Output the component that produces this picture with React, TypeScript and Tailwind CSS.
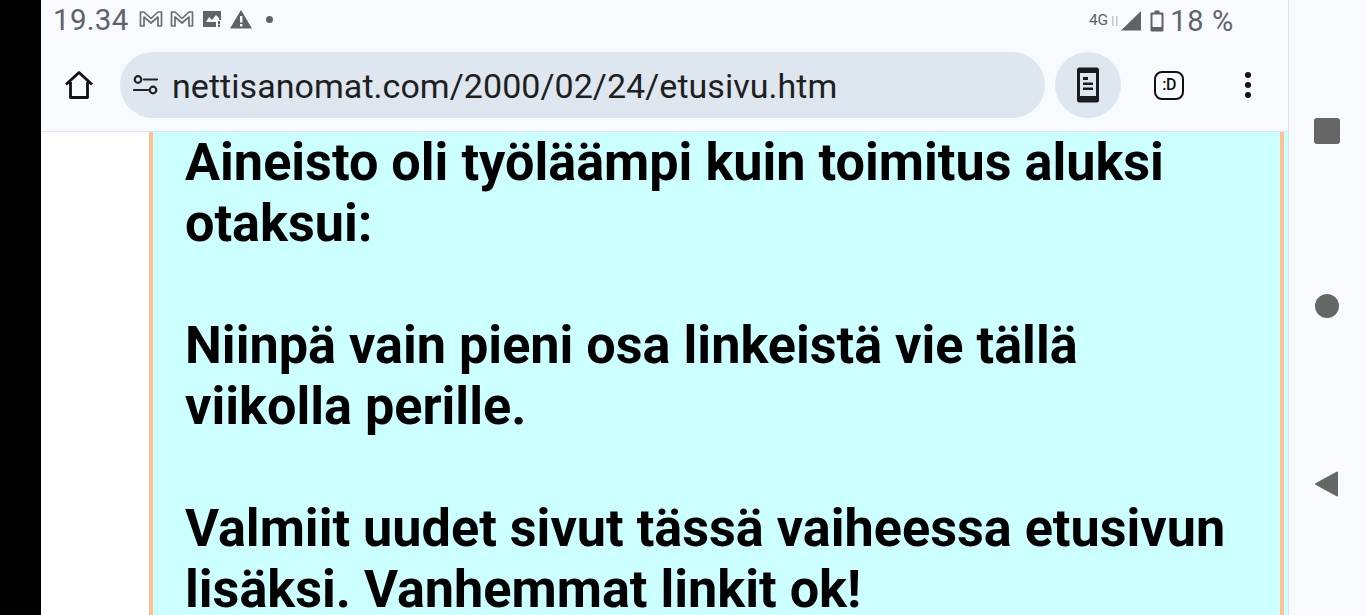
import * as React from "react";

function MailIcon() {
  return (
    <svg width="24" height="18" viewBox="0 0 24 18" fill="none" stroke="#6b6f73" strokeWidth="1.700">
      <path d="M1.500 2H5l7 6.500L19 2h3.500v14H19V7l-7 6-7-6v9H1.500z" strokeLinejoin="round" />
    </svg>
  );
}

function StatusBar() {
  return (
    <div className="flex h-[42px] items-center pl-3 pr-[54px] text-[#5f6368]">
      <span className="w-[74px] text-[29.5px] leading-none tracking-[0.3px]">19.34</span>
      <div className="mb-[4px] ml-[12px] flex items-center gap-[7px]">
        <MailIcon />
        <MailIcon />
      </div>
      <svg className="mb-[4px] ml-[8px]" width="20" height="18" viewBox="0 0 20 18" fill="#5f6368">
        <path d="M1 1h18v9h-2V8l-3-3-4 5-3-3-3 5h10v5H1z" />
        <rect x="16" y="11" width="2" height="3.500" />
        <rect x="16" y="15" width="2" height="2" />
      </svg>
      <svg className="mb-[4px] ml-[7px]" width="24" height="20" viewBox="0 0 24 20">
        <path d="M12 1 23 19.500H1z" fill="#5f6368" />
        <rect x="11" y="7" width="2.400" height="6.500" fill="#f7faff" />
        <rect x="11" y="15" width="2.400" height="2.400" fill="#f7faff" />
      </svg>
      <span className="mb-[3px] ml-[13px] h-[7px] w-[7px] rounded-full bg-[#5f6368]" />
      <div className="ml-auto flex items-center">
        <span className="text-[15.500px] leading-none">4G</span>
        <svg className="ml-[3px]" width="8" height="12" viewBox="0 0 8 12" fill="#c4c7cc">
          <rect x="1" y="1" width="1.500" height="10" />
          <rect x="5" y="1" width="1.500" height="10" />
        </svg>
        <svg className="ml-[1px]" width="22" height="22" viewBox="0 0 22 22" fill="#5f6368">
          <path d="M21 1v19.500H1z" />
        </svg>
        <svg className="ml-[8px]" width="14" height="22" viewBox="0 0 14 22">
          <path d="M4.500 0.500h5v2h3a1 1 0 0 1 1 1V20a1.500 1.500 0 0 1-1.500 1.500H2A1.500 1.500 0 0 1 .5 20V3.500a1 1 0 0 1 1-1h3z" fill="#5f6368" />
          <rect x="2.500" y="4.500" width="9" height="12.500" rx="1" fill="#f7faff" />
        </svg>
        <span className="ml-[6px] text-[29px] leading-none tracking-[0.7px]">18 %</span>
      </div>
    </div>
  );
}

function Toolbar() {
  return (
    <div className="flex h-[90px] items-start border-b border-[#dfe3e9] pt-[10px]">
      <div className="flex h-[66px] w-[79px] items-center justify-center pr-[3px]">
        <svg width="30" height="30" viewBox="0 0 30 30" fill="none" stroke="#111" strokeWidth="2.800" strokeLinejoin="round">
          <path d="M2 14.500 15 2.500l13 12M6.500 12v15.500h17V12" />
        </svg>
      </div>
      <div className="flex h-[66px] w-[925px] items-center rounded-full bg-[#dee6ef]">
        <svg className="ml-[13px]" width="26" height="22" viewBox="0 0 26 22" fill="none" stroke="#222" strokeWidth="2.200">
          <circle cx="5" cy="5.500" r="3.300" />
          <path d="M11 5.500h13M1 16h14" strokeLinecap="round" />
          <circle cx="20" cy="16" r="3.300" />
        </svg>
        <span className="ml-[13px] pt-[1px] text-[34px] leading-none tracking-[0.05px] text-[#1d1f21]">
          nettisanomat.com/2000/02/24/etusivu.htm
        </span>
      </div>
      <div className="ml-[10px] flex h-[66px] w-[66px] items-center justify-center rounded-full bg-[#dee6ef]">
        <svg width="22" height="36" viewBox="0 0 22 36">
          <rect width="22" height="35" y="0.500" rx="2.500" fill="#1b1c1e" />
          <rect x="3" y="6" width="16" height="23" fill="#dee6ef" />
          <path d="M6 10h5v3H6zM6 15.500h10v2.500H6zM6 20.500h10v2.500H6z" fill="#1b1c1e" />
        </svg>
      </div>
      <div className="flex h-[66px] w-[96px] items-center justify-center">
        <div className="flex h-[29px] w-[30px] items-center justify-center rounded-[8px] border-[2.5px] border-[#111] text-[16px] font-medium leading-none tracking-[-0.5px] text-[#111]">
          :D
        </div>
      </div>
      <div className="ml-[28px] flex h-[66px] w-[6px] flex-col items-center justify-center gap-[4px]">
        <span className="h-[6px] w-[6px] shrink-0 rounded-full bg-[#111]" />
        <span className="h-[6px] w-[6px] shrink-0 rounded-full bg-[#111]" />
        <span className="h-[6px] w-[6px] shrink-0 rounded-full bg-[#111]" />
      </div>
    </div>
  );
}

function Article() {
  return (
    <div className="flex min-h-0 flex-1 bg-white pl-[108px]">
      <div className="w-[1135px] shrink-0 border-x-4 border-[#ffc08f] bg-[#ccffff] pl-[32px] text-[52.200px] font-bold leading-[61px] text-black">
        <p>
          Aineisto oli työläämpi kuin toimitus aluksi
          <br />
          otaksui:
        </p>
        <p className="mt-[61px]">
          Niinpä vain pieni osa linkeistä vie tällä
          <br />
          viikolla perille.
        </p>
        <p className="mt-[61px]">
          Valmiit uudet sivut tässä vaiheessa etusivun
          <br />
          lisäksi. Vanhemmat linkit ok!
        </p>
      </div>
      <div className="flex-1 bg-[#ccffff]" />
    </div>
  );
}

function NavBar() {
  return (
    <div className="flex w-[78px] shrink-0 flex-col items-center border-l border-[#dfe3e9] bg-[#f7faff] pt-[118px] pr-[2px]">
      <div className="h-[26px] w-[26px] rounded-[3px] bg-[#666666]" />
      <div className="mt-[150px] h-[24px] w-[24px] rounded-full bg-[#666666]" />
      <svg className="mt-[152px]" width="26" height="28" viewBox="0 0 26 28" fill="#666666">
        <path d="M24 2.500v23a1 1 0 0 1-1.500 .8L2 15a1 1 0 0 1 0-2L22.500 1.700A1 1 0 0 1 24 2.500z" />
      </svg>
    </div>
  );
}

export default function App() {
  return (
    <div className="flex h-[615px] w-[1366px] overflow-hidden bg-black font-['Roboto',sans-serif]">
      <div className="w-[41px] shrink-0 bg-black" />
      <div className="flex w-[1247px] shrink-0 flex-col overflow-hidden bg-[#f7faff]">
        <StatusBar />
        <Toolbar />
        <Article />
      </div>
      <NavBar />
    </div>
  );
}
